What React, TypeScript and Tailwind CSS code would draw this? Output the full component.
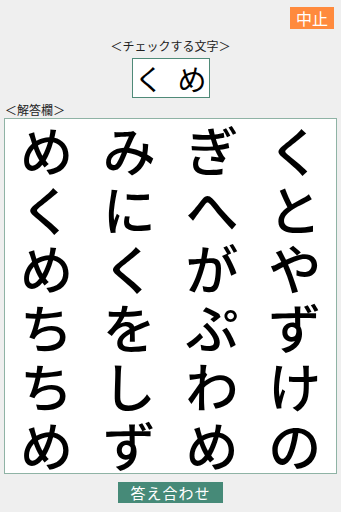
const rows = [
  ["め", "み", "ぎ", "く"],
  ["く", "に", "へ", "と"],
  ["め", "く", "が", "や"],
  ["ち", "を", "ぷ", "ず"],
  ["ち", "し", "わ", "け"],
  ["め", "ず", "め", "の"],
];

const jp = { fontFamily: '"Noto Sans CJK JP", "Noto Sans", sans-serif' };

export default function App() {
  return (
    <div
      className="w-[341px] h-[512px] bg-[#efefef] flex flex-col text-black"
      style={jp}
    >
      {/* 中止 */}
      <div className="flex justify-end pt-[7px] pr-[7px]">
        <button className="w-[44px] h-[22px] bg-[#ff8a3d] text-white text-[16px] leading-none flex items-center justify-center">
          中止
        </button>
      </div>

      <div className="mt-[10px] text-center text-[12px] leading-[14px] text-[#222]">
        ＜チェックする文字＞
      </div>

      <div className="mx-auto mt-[5px] w-[78px] h-[40px] border border-[#4f8a78] bg-white flex items-center justify-center gap-[14px] text-[29px] leading-[32px]">
        <span>く</span>
        <span>め</span>
      </div>

      <div className="pl-[5px] mt-[5px] text-[12px] leading-[14px] text-[#222]">
        ＜解答欄＞
      </div>

      {/* 解答欄 */}
      <div className="mx-[4px] mt-[1px] h-[356px] border border-[#8fb3a5] bg-white grid grid-cols-4 grid-rows-6">
        {rows.flat().map((ch, i) => (
          <div
            key={i}
            className="flex items-center justify-center text-[53px] leading-[56px] font-medium"
          >
            {ch}
          </div>
        ))}
      </div>

      <button className="mx-auto mt-[8px] w-[105px] h-[21px] bg-[#468a78] text-white text-[15px] leading-none flex items-center justify-center tracking-[1px]">
        答え合わせ
      </button>
    </div>
  );
}
